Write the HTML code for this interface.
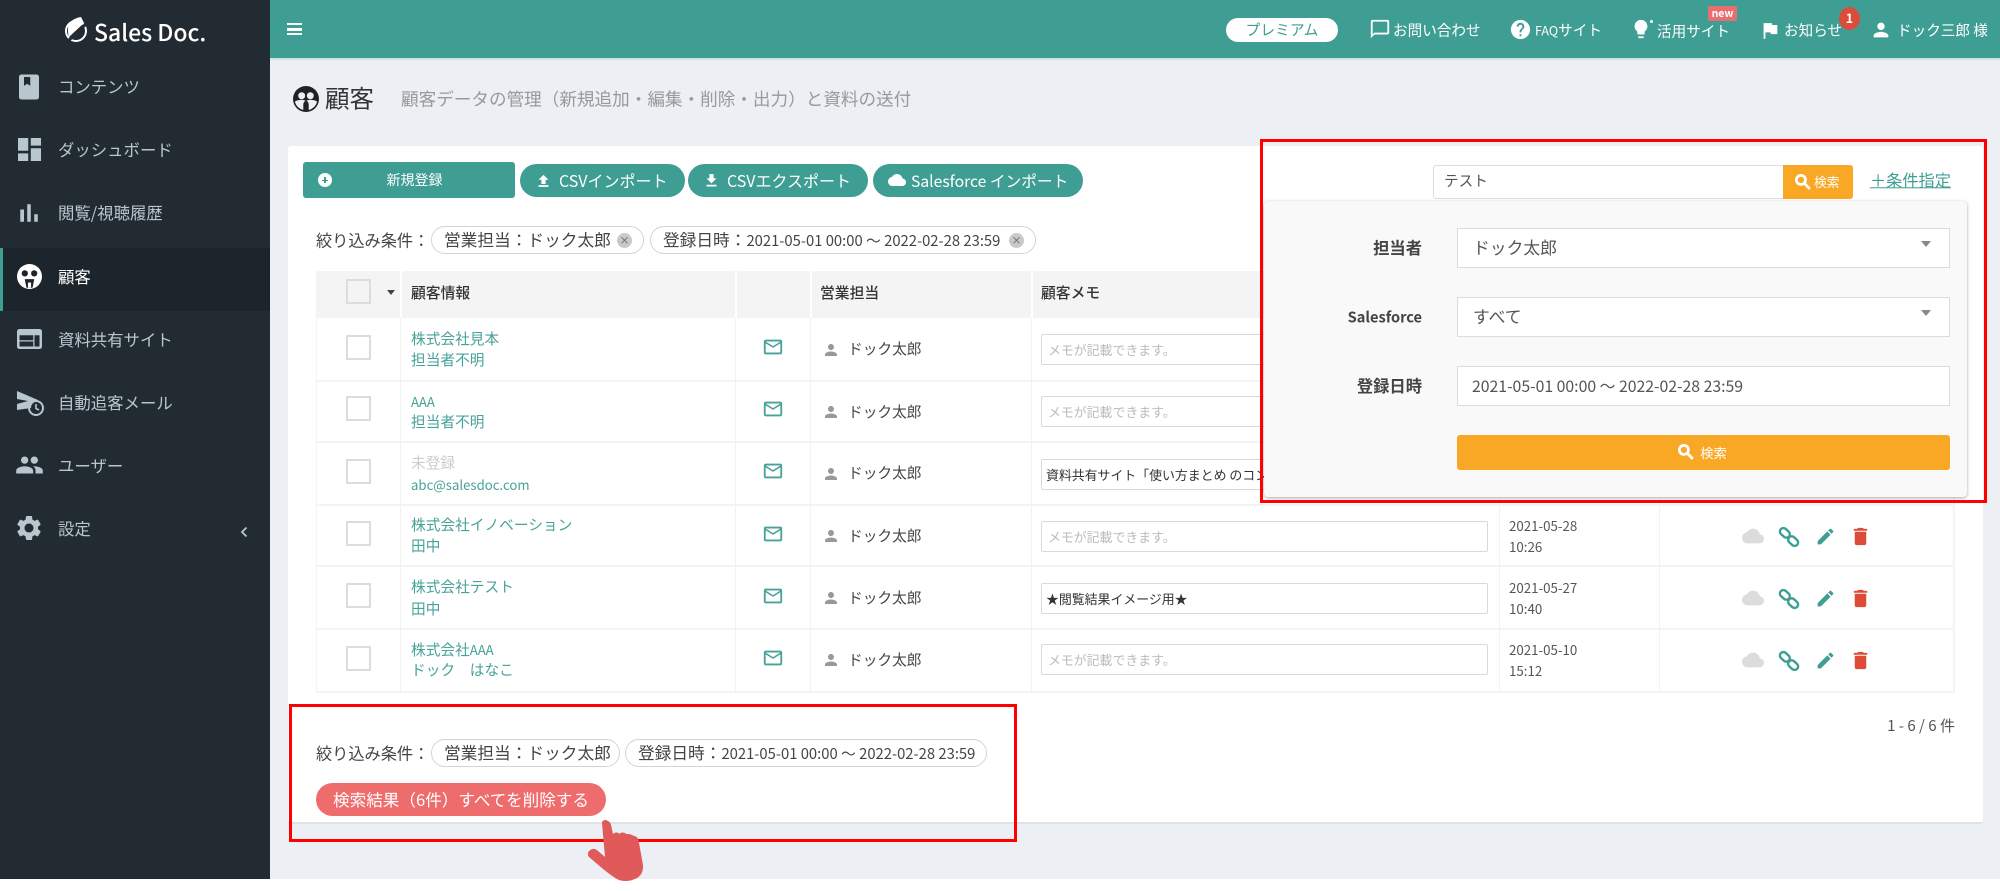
<!DOCTYPE html>
<html lang="ja"><head><meta charset="utf-8"><title>顧客</title>
<style>
*{box-sizing:border-box}
html,body{margin:0;padding:0;width:2000px;height:891px;overflow:hidden;background:#fff;font-family:"Liberation Sans","Noto Sans CJK JP",sans-serif;}
body{font-family:"Noto Sans CJK JP","Liberation Sans",sans-serif;color:#444}
.a{position:absolute}
.t{position:absolute;white-space:nowrap;transform:translateY(-50%);line-height:1.2}
.ic{position:absolute;display:block}
.nav{font-size:16.4px;color:#b8c7ce;left:58px}
.h{font-size:14.6px;color:#fff}
.c{font-size:14.7px;color:#47a298;left:411px}
.c i{font-style:normal;font-size:13.2px}
.n{font-size:14.7px;color:#444;left:848px}
.d{font-size:13.3px;color:#555;left:1509px}
.memo{position:absolute;left:1041px;width:447px;height:31px;background:#fff;border:1px solid #d9d9d9;border-radius:2px;font-size:12.9px;line-height:29px;padding-left:6px;color:#bbb;white-space:nowrap;overflow:hidden}
.memo.f{color:#333;padding-left:4px}
.cb{position:absolute;left:346px;width:25px;height:25px;border:2px solid #dfdbd6;background:#fff}
.vl{position:absolute;width:1px;background:#f2f2f2;top:271px;height:422px}
.hl{position:absolute;left:316px;width:1638px;height:2px;background:#f4f4f4}
.pill{position:absolute;top:164px;height:33px;background:#3f9e94;border-radius:17px;color:#fff;font-size:16px;line-height:33px;white-space:nowrap}
.chip{position:absolute;height:28px;border:1.5px solid #d4d4d4;border-radius:14px;background:#fff;color:#444;font-size:16.7px;line-height:25px;white-space:nowrap}
.chip small{font-size:14.8px}
.x{position:absolute;width:15px;height:15px;border-radius:50%;background:#c9c9c9;color:#555;font-size:10px;line-height:14px;text-align:center}
.sel{position:absolute;left:1457px;width:493px;background:#fff;border:1px solid #d9dce6;color:#555;white-space:nowrap}
.lab{position:absolute;right:578px;font-weight:700;font-size:14.6px;color:#444;white-space:nowrap;transform:translateY(-50%)}
.tri{position:absolute;width:0;height:0;border-left:5px solid transparent;border-right:5px solid transparent;border-top:6px solid #888}
.red{position:absolute;border:3px solid #f00;z-index:20;pointer-events:none}
</style></head><body>
<svg width="0" height="0" style="position:absolute">
<defs>
<symbol id="person" viewBox="0 0 24 24"><path d="M12 12c2.21 0 4-1.79 4-4s-1.79-4-4-4-4 1.79-4 4 1.79 4 4 4zm0 2c-2.67 0-8 1.34-8 4v2h16v-2c0-2.66-5.33-4-8-4z"/></symbol>
<symbol id="mail" viewBox="0 0 24 24"><path d="M20 4H4c-1.1 0-1.99.9-1.99 2L2 18c0 1.1.9 2 2 2h16c1.1 0 2-.9 2-2V6c0-1.1-.9-2-2-2zm0 14H4V8l8 5 8-5v10zm-8-7L4 6h16l-8 5z"/></symbol>
<symbol id="cloud" viewBox="0 0 24 24"><path d="M19.35 10.04C18.67 6.59 15.64 4 12 4 9.11 4 6.6 5.64 5.35 8.04 2.34 8.36 0 10.91 0 14c0 3.31 2.69 6 6 6h13c2.76 0 5-2.24 5-5 0-2.64-2.05-4.78-4.65-4.96z"/></symbol>
<symbol id="edit" viewBox="0 0 24 24"><path d="M3 17.25V21h3.75L17.81 9.94l-3.75-3.75L3 17.25zM20.71 7.04c.39-.39.39-1.02 0-1.41l-2.34-2.34c-.39-.39-1.02-.39-1.41 0l-1.83 1.83 3.75 3.75 1.83-1.83z"/></symbol>
<symbol id="del" viewBox="0 0 24 24"><path d="M6 19c0 1.1.9 2 2 2h8c1.1 0 2-.9 2-2V7H6v12zM19 4h-3.500l-1-1h-5l-1 1H5v2h14V4z"/></symbol>
<symbol id="link" viewBox="0 0 24 24"><g fill="none" stroke="currentColor" stroke-width="2.600"><rect x="-6" y="-3.800" width="12" height="7.600" rx="3.800" transform="translate(7.500 7.500) rotate(42)"/><rect x="-6" y="-3.800" width="12" height="7.600" rx="3.800" transform="translate(16.500 16.500) rotate(42)"/></g></symbol>
<symbol id="search" viewBox="0 0 24 24"><path d="M15.5 14h-.79l-.28-.27C15.41 12.59 16 11.11 16 9.5 16 5.91 13.09 3 9.5 3S3 5.91 3 9.5 5.91 16 9.5 16c1.61 0 3.09-.59 4.23-1.57l.27.28v.79l5 4.99L20.49 19l-4.99-5zm-6 0C7.01 14 5 11.99 5 9.5S7.01 5 9.5 5 14 7.01 14 9.5 11.99 14 9.5 14z" stroke="currentColor" stroke-width="1.300"/></symbol>
</defs></svg>

<!-- backgrounds -->
<div class="a" style="left:0;top:0;width:2000px;height:879px;background:#eceff4"></div>
<div class="a" style="left:0;top:0;width:270px;height:879px;background:#222b32"></div>
<div class="a" style="left:0;top:248px;width:270px;height:63px;background:#1c252c"></div>
<div class="a" style="left:0;top:248px;width:3px;height:63px;background:#3f9e94"></div>
<div class="a" style="left:270px;top:0;width:1730px;height:60px;background:#3f9e94;border-bottom:2px solid #cfe4e1"></div>

<!-- logo -->
<svg class="ic" style="left:64px;top:16px" width="24" height="29" viewBox="0 0 24 29"><circle cx="12" cy="15" r="10" fill="none" stroke="#fff" stroke-width="2"/><path d="M4 13C4 6 10 2 17 1l3 6L5 21c-1-2-1-5-1-8z" fill="#fff"/><path d="M3 26L22 8" stroke="#222b32" stroke-width="3"/></svg>
<div class="t" style="left:94px;top:32px;font-size:23px;font-weight:500;color:#fff">Sales Doc.</div>

<!-- sidebar -->
<svg class="ic" style="left:14px;top:72px;fill:#b8c7ce" width="30" height="30" viewBox="0 0 24 24"><path d="M18 2H6c-1.1 0-2 .9-2 2v16c0 1.1.9 2 2 2h12c1.1 0 2-.9 2-2V4c0-1.1-.9-2-2-2zM8 4h5v7l-2.5-1.5L8 11V4z"/></svg>
<div class="t nav" style="top:87px">コンテンツ</div>
<svg class="ic" style="left:18px;top:138px;fill:#b8c7ce" width="23" height="23" viewBox="3 3 18 18"><path d="M3 13h8V3H3v10zm0 8h8v-6H3v6zm10 0h8V11h-8v10zm0-18v6h8V3h-8z"/></svg>
<div class="t nav" style="top:150px">ダッシュボード</div>
<svg class="ic" style="left:14px;top:198px;fill:#b8c7ce" width="30" height="30" viewBox="0 0 24 24"><path d="M5 9.2h3V19H5zM10.6 5h2.8v14h-2.8zm5.6 8H19v6h-2.8z"/></svg>
<div class="t nav" style="top:213px">閲覧/視聴履歴</div>
<svg class="ic" style="left:17px;top:264px" width="25" height="25" viewBox="0 0 24 24"><circle cx="12" cy="12" r="12" fill="#fff"/><circle cx="7.500" cy="9" r="3" fill="#1c252c"/><circle cx="16.500" cy="9" r="3" fill="#1c252c"/><path d="M8 14.500h8c.3 0 .5.2.5.5l-1.500 7.500a11 11 0 0 1-6 0L7.500 15c0-.3.2-.5.500-.5z" fill="#1c252c"/><path d="M10.500 22.800v-5h3v5z" fill="#fff"/></svg>
<div class="t nav" style="top:277px;color:#fff">顧客</div>
<svg class="ic" style="left:17px;top:329px;fill:#b8c7ce" width="25" height="20" viewBox="2 4 20 16" preserveAspectRatio="none"><path d="M20 4H4c-1.1 0-1.99.9-1.99 2L2 18c0 1.1.9 2 2 2h16c1.1 0 2-.9 2-2V6c0-1.1-.9-2-2-2zm-5 14H4v-4h11v4zm0-5H4V9h11v4zm5 5h-4V9h4v9z"/></svg>
<div class="t nav" style="top:340px">資料共有サイト</div>
<svg class="ic" style="left:17px;top:391px" width="27" height="25" viewBox="0 0 27 25"><path d="M0 0l21 9-3 2c-3 1-4 4-4 6l-14 2v-6l11-3L0 8z" fill="#b8c7ce"/><circle cx="19" cy="17" r="7" fill="none" stroke="#b8c7ce" stroke-width="2"/><path d="M19 13v4.500l3 1.500" fill="none" stroke="#b8c7ce" stroke-width="1.600"/></svg>
<div class="t nav" style="top:403px">自動追客メール</div>
<svg class="ic" style="left:15px;top:450px;fill:#b8c7ce" width="29" height="30" viewBox="0 0 24 24"><path d="M16 11c1.66 0 2.99-1.34 2.99-3S17.66 5 16 5c-1.66 0-3 1.34-3 3s1.34 3 3 3zm-8 0c1.66 0 2.99-1.34 2.99-3S9.66 5 8 5C6.34 5 5 6.34 5 8s1.34 3 3 3zm0 2c-2.33 0-7 1.17-7 3.5V19h14v-2.5c0-2.33-4.67-3.5-7-3.5zm8 0c-.29 0-.62.02-.97.05 1.16.84 1.97 1.97 1.97 3.45V19h6v-2.5c0-2.33-4.67-3.5-7-3.5z"/></svg>
<div class="t nav" style="top:466px">ユーザー</div>
<svg class="ic" style="left:14px;top:513px;fill:#b8c7ce" width="30" height="30" viewBox="0 0 24 24"><path d="M19.14 12.94c.04-.3.06-.61.06-.94 0-.32-.02-.64-.07-.94l2.03-1.58c.18-.14.23-.41.12-.61l-1.92-3.32c-.12-.22-.37-.29-.59-.22l-2.39.96c-.5-.38-1.03-.7-1.62-.94l-.36-2.54c-.04-.24-.24-.41-.48-.41h-3.84c-.24 0-.43.17-.47.41l-.36 2.54c-.59.24-1.13.57-1.62.94l-2.39-.96c-.22-.08-.47 0-.59.22L2.74 8.87c-.12.21-.08.47.12.61l2.03 1.58c-.05.3-.09.63-.09.94s.02.64.07.94l-2.03 1.58c-.18.14-.23.41-.12.61l1.92 3.32c.12.22.37.29.59.22l2.39-.96c.5.38 1.03.7 1.62.94l.36 2.54c.05.24.24.41.48.41h3.84c.24 0 .44-.17.47-.41l.36-2.54c.59-.24 1.13-.56 1.62-.94l2.39.96c.22.08.47 0 .59-.22l1.92-3.32c.12-.22.07-.47-.12-.61l-2.01-1.58zM12 15.6c-1.98 0-3.6-1.62-3.6-3.6s1.62-3.6 3.6-3.6 3.6 1.62 3.6 3.6-1.62 3.6-3.6 3.6z"/></svg>
<div class="t nav" style="top:529px">設定</div>
<svg class="ic" style="left:240px;top:526px" width="8" height="12" viewBox="0 0 8 12"><path d="M6.500 1.500L2 6l4.500 4.500" fill="none" stroke="#b8c7ce" stroke-width="1.800"/></svg>

<!-- header -->
<div class="a" style="left:287px;top:23px;width:15px;height:12px;border-top:2.500px solid #fff;border-bottom:2.500px solid #fff"></div>
<div class="a" style="left:287px;top:28px;width:15px;height:2.500px;background:#fff"></div>
<div class="a" style="left:1226px;top:18px;width:112px;height:24px;background:#fff;border-radius:12px;color:#3f9e94;font-size:14.8px;line-height:24px;text-align:center">プレミアム</div>
<svg class="ic" style="left:1369px;top:18px;fill:#fff" width="22" height="22" viewBox="0 0 24 24"><path d="M20 2H4c-1.1 0-2 .9-2 2v18l4-4h14c1.1 0 2-.9 2-2V4c0-1.1-.9-2-2-2zm0 14H6l-2 2V4h16v12z"/></svg>
<div class="t h" style="left:1393px;top:30px">お問い合わせ</div>
<svg class="ic" style="left:1509px;top:18px;fill:#fff" width="23" height="23" viewBox="0 0 24 24"><path d="M12 2C6.48 2 2 6.48 2 12s4.48 10 10 10 10-4.48 10-10S17.52 2 12 2zm1 17h-2v-2h2v2zm2.07-7.75l-.9.92C13.45 12.9 13 13.5 13 15h-2v-.5c0-1.1.45-2.1 1.17-2.83l1.24-1.26c.37-.36.59-.86.59-1.41 0-1.1-.9-2-2-2s-2 .9-2 2H8c0-2.21 1.79-4 4-4s4 1.790 4 4c0 .88-.36 1.68-.93 2.25z"/></svg>
<div class="t h" style="left:1535px;top:30px"><span style="font-size:12.5px">FAQ</span>サイト</div>
<svg class="ic" style="left:1630px;top:17px;fill:#fff" width="22" height="24" viewBox="0 0 24 24"><path d="M9 21c0 .55.45 1 1 1h4c.55 0 1-.45 1-1v-1H9v1zm3-19C8.14 2 5 5.14 5 9c0 2.38 1.19 4.47 3 5.74V17c0 .55.45 1 1 1h6c.55 0 1-.45 1-1v-2.26c1.81-1.27 3-3.36 3-5.74 0-3.86-3.14-7-7-7z"/></svg>
<div class="a" style="left:1650px;top:20px;width:3px;height:3px;background:#fff;border-radius:50%"></div>
<div class="t h" style="left:1657px;top:31px">活用サイト</div>
<div class="a" style="left:1708px;top:6px;width:29px;height:15px;background:#e86f6f;border-radius:2px;color:#fff;font-size:10.5px;font-weight:700;line-height:15px;text-align:center">new</div>
<svg class="ic" style="left:1759px;top:19px;fill:#fff" width="22" height="23" viewBox="0 0 24 24"><path d="M14.4 6L14 4H5v17h2v-7h5.6l.4 2h7V6z"/></svg>
<div class="t h" style="left:1784px;top:30px">お知らせ</div>
<div class="a" style="left:1839px;top:7px;width:21px;height:23px;background:#dd4b39;border-radius:50%;color:#fff;font-size:12.5px;font-weight:700;line-height:22px;text-align:center">1</div>
<svg class="ic" style="left:1870px;top:19px;fill:#fff" width="22" height="22"><use href="#person"/></svg>
<div class="t h" style="left:1897px;top:30px">ドック三郎 様</div>

<!-- page title -->
<svg class="ic" style="left:293px;top:86px" width="26" height="26" viewBox="0 0 24 24"><circle cx="12" cy="12" r="12" fill="#222"/><circle cx="8" cy="9" r="3.200" fill="#eceff4"/><circle cx="16" cy="9" r="3.200" fill="#eceff4"/><path d="M1.800 14.500C3 13.300 5.500 12.800 8 12.800c1.300 0 2.700.2 3.500.8-1.200.8-2 2-2 3.400v5.200a10.500 10.500 0 0 1-7.700-7.700zM22.200 14.500C21 13.300 18.500 12.800 16 12.800c-1.300 0-2.700.2-3.500.8 1.200.8 2 2 2 3.400v5.200a10.500 10.500 0 0 0 7.700-7.700z" fill="#eceff4"/></svg>
<div class="t" style="left:325px;top:98px;font-size:24.5px;color:#333">顧客</div>
<div class="t" style="left:401px;top:99px;font-size:17.6px;color:#999">顧客データの管理（新規追加・編集・削除・出力）と資料の送付</div>

<!-- card -->
<div class="a" style="left:288px;top:146px;width:1695px;height:678px;background:#fff;border-radius:3px;border-bottom:2px solid #dfe2e8"></div>

<!-- buttons -->
<div class="a" style="left:303px;top:162px;width:212px;height:36px;background:#3f9e94;border-radius:3px;color:#fff;font-size:14px;line-height:36px;text-align:center;padding-left:11px"><span style="position:absolute;left:15px;top:11px;width:14px;height:14px;border-radius:50%;background:#fff"></span><span style="position:absolute;left:19px;top:17.5px;width:6px;height:1.5px;background:#3f9e94"></span><span style="position:absolute;left:21.3px;top:15.3px;width:1.5px;height:6px;background:#3f9e94"></span>新規登録</div>
<div class="pill" style="left:520px;width:165px;padding-left:39px"><svg class="ic" style="left:15px;top:8px;fill:#fff" width="17" height="17" viewBox="0 0 24 24"><path d="M5 21h14v-2.500H5V21zM9 17h6v-6h4l-7-7-7 7h4v6z"/></svg><span>CSVインポート</span></div>
<div class="pill" style="left:688px;width:180px;padding-left:39px"><svg class="ic" style="left:15px;top:8px;fill:#fff" width="17" height="17" viewBox="0 0 24 24"><path d="M19 9h-4V3H9v6H5l7 7 7-7zM5 18v2.500h14V18H5z"/></svg><span>CSVエクスポート</span></div>
<div class="pill" style="left:873px;width:210px;padding-left:38px;font-size:15.7px"><svg class="ic" style="left:14px;top:7px;fill:#fff" width="20" height="18"><use href="#cloud"/></svg><span>Salesforce インポート</span></div>

<!-- filter top -->
<div class="t" style="left:316px;top:240px;font-size:16.2px;color:#444">絞り込み条件：</div>
<div class="chip" style="left:431px;top:226px;width:213px;padding-left:12px">営業担当：ドック太郎<span class="x" style="left:185px;top:6px">×</span></div>
<div class="chip" style="left:650px;top:226px;width:386px;padding-left:12px">登録日時：<small>2021-05-01 00:00 ～ 2022-02-28 23:59</small><span class="x" style="left:358px;top:6px">×</span></div>

<!-- table -->
<div class="a" style="left:316px;top:271px;width:1638px;height:47px;background:#f4f4f4"></div>
<div class="a" style="left:316px;top:318px;width:1px;height:375px;background:#f4f4f4"></div>
<div class="a" style="left:1953px;top:318px;width:2px;height:375px;background:#f4f4f4"></div>
<div class="vl" style="left:400px"></div><div class="vl" style="left:735px"></div><div class="vl" style="left:810px"></div><div class="vl" style="left:1031px"></div><div class="vl" style="left:1499px"></div><div class="vl" style="left:1659px"></div>
<div class="a" style="left:400px;top:271px;width:2px;height:47px;background:#fff"></div><div class="a" style="left:735px;top:271px;width:2px;height:47px;background:#fff"></div><div class="a" style="left:810px;top:271px;width:2px;height:47px;background:#fff"></div><div class="a" style="left:1031px;top:271px;width:2px;height:47px;background:#fff"></div>
<div class="hl" style="top:380px"></div><div class="hl" style="top:441px"></div><div class="hl" style="top:504px"></div><div class="hl" style="top:565px"></div><div class="hl" style="top:628px"></div><div class="hl" style="top:691px"></div>

<div class="cb" style="top:279px;background:#f4f4f4"></div>
<div class="tri" style="left:387px;top:290px;border-top-color:#444;border-left-width:4px;border-right-width:4px;border-top-width:5px"></div>
<div class="t" style="left:411px;top:293px;font-size:14.8px;color:#333;font-weight:500">顧客情報</div>
<div class="t" style="left:820px;top:293px;font-size:14.8px;color:#333;font-weight:500">営業担当</div>
<div class="t" style="left:1041px;top:293px;font-size:14.8px;color:#333;font-weight:500">顧客メモ</div>

<!-- row 1 -->
<div class="cb" style="top:335px"></div>
<div class="t c" style="top:339px">株式会社見本</div><div class="t c" style="top:360px">担当者不明</div>
<svg class="ic" style="left:762px;top:336px;fill:#47a298" width="22" height="22"><use href="#mail"/></svg>
<svg class="ic" style="left:822px;top:340px;fill:#999" width="18" height="20"><use href="#person"/></svg>
<div class="t n" style="top:349px">ドック太郎</div>
<div class="memo" style="top:334px">メモが記載できます。</div>
<!-- row 2 -->
<div class="cb" style="top:396px"></div>
<div class="t c" style="top:402px"><i>AAA</i></div><div class="t c" style="top:422px">担当者不明</div>
<svg class="ic" style="left:762px;top:398px;fill:#47a298" width="22" height="22"><use href="#mail"/></svg>
<svg class="ic" style="left:822px;top:402px;fill:#999" width="18" height="20"><use href="#person"/></svg>
<div class="t n" style="top:412px">ドック太郎</div>
<div class="memo" style="top:396px">メモが記載できます。</div>
<!-- row 3 -->
<div class="cb" style="top:459px"></div>
<div class="t c" style="top:463px;color:#ccc">未登録</div><div class="t c" style="top:485px"><i>abc@salesdoc.com</i></div>
<svg class="ic" style="left:762px;top:460px;fill:#47a298" width="22" height="22"><use href="#mail"/></svg>
<svg class="ic" style="left:822px;top:464px;fill:#999" width="18" height="20"><use href="#person"/></svg>
<div class="t n" style="top:473px">ドック太郎</div>
<div class="memo f" style="top:459px">資料共有サイト「使い方まとめ のコンテンツ」を閲覧しました</div>
<!-- row 4 -->
<div class="cb" style="top:521px"></div>
<div class="t c" style="top:525px">株式会社イノベーション</div><div class="t c" style="top:546px">田中</div>
<svg class="ic" style="left:762px;top:523px;fill:#47a298" width="22" height="22"><use href="#mail"/></svg>
<svg class="ic" style="left:822px;top:526px;fill:#999" width="18" height="20"><use href="#person"/></svg>
<div class="t n" style="top:536px">ドック太郎</div>
<div class="memo" style="top:521px">メモが記載できます。</div>
<div class="t d" style="top:526px">2021-05-28</div><div class="t d" style="top:547px">10:26</div>
<!-- row 5 -->
<div class="cb" style="top:583px"></div>
<div class="t c" style="top:587px">株式会社テスト</div><div class="t c" style="top:609px">田中</div>
<svg class="ic" style="left:762px;top:585px;fill:#47a298" width="22" height="22"><use href="#mail"/></svg>
<svg class="ic" style="left:822px;top:588px;fill:#999" width="18" height="20"><use href="#person"/></svg>
<div class="t n" style="top:598px">ドック太郎</div>
<div class="memo f" style="top:583px">★閲覧結果イメージ用★</div>
<div class="t d" style="top:588px">2021-05-27</div><div class="t d" style="top:609px">10:40</div>
<!-- row 6 -->
<div class="cb" style="top:646px"></div>
<div class="t c" style="top:650px">株式会社<i>AAA</i></div><div class="t c" style="top:670px">ドック　はなこ</div>
<svg class="ic" style="left:762px;top:647px;fill:#47a298" width="22" height="22"><use href="#mail"/></svg>
<svg class="ic" style="left:822px;top:650px;fill:#999" width="18" height="20"><use href="#person"/></svg>
<div class="t n" style="top:660px">ドック太郎</div>
<div class="memo" style="top:644px">メモが記載できます。</div>
<div class="t d" style="top:650px">2021-05-10</div><div class="t d" style="top:671px">15:12</div>

<!-- row actions -->
<svg class="ic" style="left:1742px;top:525px;fill:#dcdcdc" width="22" height="22"><use href="#cloud"/></svg>
<svg class="ic" style="left:1778px;top:526px;color:#3f9e94" width="22" height="22"><use href="#link"/></svg>
<svg class="ic" style="left:1815px;top:526px;fill:#3f9e94" width="21" height="21"><use href="#edit"/></svg>
<svg class="ic" style="left:1849px;top:525px;fill:#dd4b39" width="23" height="23"><use href="#del"/></svg>
<svg class="ic" style="left:1742px;top:587px;fill:#dcdcdc" width="22" height="22"><use href="#cloud"/></svg>
<svg class="ic" style="left:1778px;top:588px;color:#3f9e94" width="22" height="22"><use href="#link"/></svg>
<svg class="ic" style="left:1815px;top:588px;fill:#3f9e94" width="21" height="21"><use href="#edit"/></svg>
<svg class="ic" style="left:1849px;top:587px;fill:#dd4b39" width="23" height="23"><use href="#del"/></svg>
<svg class="ic" style="left:1742px;top:649px;fill:#dcdcdc" width="22" height="22"><use href="#cloud"/></svg>
<svg class="ic" style="left:1778px;top:650px;color:#3f9e94" width="22" height="22"><use href="#link"/></svg>
<svg class="ic" style="left:1815px;top:650px;fill:#3f9e94" width="21" height="21"><use href="#edit"/></svg>
<svg class="ic" style="left:1849px;top:649px;fill:#dd4b39" width="23" height="23"><use href="#del"/></svg>

<div class="t" style="right:45px;top:726px;font-size:15px;color:#555">1 - 6 / 6 件</div>

<!-- search -->
<div class="a" style="left:1264px;top:146px;width:710px;height:55px;background:#fff"></div>
<div class="a" style="left:1433px;top:165px;width:351px;height:34px;background:#fff;border:1px solid #dcdde6;border-radius:3px 0 0 3px;font-size:14.6px;line-height:30px;padding-left:10px;color:#555">テスト</div>
<div class="a" style="left:1783px;top:165px;width:70px;height:34px;background:#f9a825;border-radius:0 3px 3px 0;color:#fff;font-size:12.8px;line-height:34px;padding-left:31px"><svg class="ic" style="left:10px;top:7px;fill:#fff;color:#fff" width="20" height="20"><use href="#search"/></svg>検索</div>
<div class="t" style="left:1870px;top:180px;font-size:16.2px;color:#3f9e94;text-decoration:underline">＋条件指定</div>

<div class="a" style="left:1264px;top:201px;width:703px;height:296px;background:#f9f9f9;border-radius:4px;box-shadow:0 1px 3px rgba(0,0,0,.35)"></div>
<div class="lab" style="top:247px;font-size:16.300px">担当者</div>
<div class="lab" style="top:317px">Salesforce</div>
<div class="lab" style="top:385px;font-size:16.300px">登録日時</div>
<div class="sel" style="top:228px;height:40px;font-size:16.800px;line-height:37px;padding-left:15px">ドック太郎</div>
<div class="tri" style="left:1921px;top:241px"></div>
<div class="sel" style="top:297px;height:40px;font-size:16.800px;line-height:37px;padding-left:15px">すべて</div>
<div class="tri" style="left:1921px;top:310px"></div>
<div class="sel" style="top:366px;height:40px;font-size:15.800px;line-height:38px;padding-left:14px">2021-05-01 00:00 ～ 2022-02-28 23:59</div>
<div class="a" style="left:1457px;top:435px;width:493px;height:35px;background:#f9a825;border-radius:3px;color:#fff;font-size:13.3px;line-height:35px;text-align:center;padding-left:20px"><svg class="ic" style="left:219px;top:7px;fill:#fff;color:#fff" width="20" height="20"><use href="#search"/></svg>検索</div>

<!-- bottom filter -->
<div class="t" style="left:316px;top:753px;font-size:16.2px;color:#444">絞り込み条件：</div>
<div class="chip" style="left:431px;top:739px;width:189px;padding-left:12px">営業担当：ドック太郎</div>
<div class="chip" style="left:625px;top:739px;width:362px;padding-left:12px">登録日時：<small>2021-05-01 00:00 ～ 2022-02-28 23:59</small></div>
<div class="a" style="left:316px;top:783px;width:290px;height:33px;background:#ef6c6c;border-radius:17px;color:#fff;font-size:16.6px;line-height:32px;text-align:center;white-space:nowrap">検索結果（6件）すべてを削除する</div>

<!-- red boxes -->
<div class="red" style="left:1260px;top:139px;width:727px;height:364px"></div>
<div class="red" style="left:289px;top:704px;width:728px;height:138px"></div>

<!-- hand -->
<svg class="ic" style="left:0;top:0;z-index:21" width="2000" height="891"><path d="M602 823C602 820 606 819 608 821C610 822 611 824 611.500 827L613 834C615 832 618 832 619.500 834C621 832 624 832 626.500 834C628 834 631 834 634 836C636 836 638 838 638.500 840L643 865C643.500 871 641 876 637 878C632 881 625 882 619 880C614 878 604 870 589 857C587 855 588 851 590.500 850C593 848 596 849 598 851L605 857z" fill="#e05a5a"/></svg>
</body></html>
